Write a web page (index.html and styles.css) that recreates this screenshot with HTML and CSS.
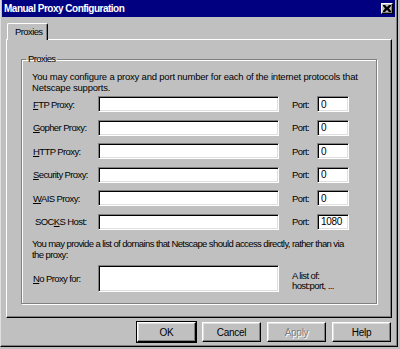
FILE: index.html
```html
<!DOCTYPE html>
<html>
<head>
   <title>Manual Proxy Configuration</title>
   <link rel="stylesheet" href="styles.css">
</head>
<body>
   <!-- dialog window -->
   <div class="window">
       <div class="titlebar">
           <span class="title">Manual Proxy Configuration</span>
           <span class="close-btn">
               <svg width="8" height="7" viewBox="0 0 8 7">
                   <path d="M0 0h2l2 2 2-2h2v1l-2 2.5 2 2.5v1h-2l-2-2-2 2h-2v-1l2-2.5-2-2.5z" fill="#000"/>
               </svg>
           </span>
       </div>

       <div class="content">
           <div class="tabs">
               <div class="tab active">Proxies</div>
           </div>
           <div class="tab-panel">
               <fieldset class="group">
                   <legend>Proxies</legend>
                   <p class="note note-first">You may configure a proxy and port number for each of the internet protocols that<br>Netscape supports.</p>

                   <div class="proxy-grid">
                       <label><u>F</u>TP Proxy:</label>
                       <input type="text" class="field host">
                       <label class="port-label">Port:</label>
                       <input type="text" class="field port" value="0">

                       <label><u>G</u>opher Proxy:</label>
                       <input type="text" class="field host">
                       <label class="port-label">Port:</label>
                       <input type="text" class="field port" value="0">

                       <label><u>H</u>TTP Proxy:</label>
                       <input type="text" class="field host">
                       <label class="port-label">Port:</label>
                       <input type="text" class="field port" value="0">

                       <label><u>S</u>ecurity Proxy:</label>
                       <input type="text" class="field host">
                       <label class="port-label">Port:</label>
                       <input type="text" class="field port" value="0">

                       <label><u>W</u>AIS Proxy:</label>
                       <input type="text" class="field host">
                       <label class="port-label">Port:</label>
                       <input type="text" class="field port" value="0">

                       <label class="indent">SOC<u>K</u>S Host:</label>
                       <input type="text" class="field host">
                       <label class="port-label">Port:</label>
                       <input type="text" class="field port" value="1080">
                   </div>

                   <p class="note note-second">You may provide a list of domains that Netscape should access directly, rather than via<br>the proxy:</p>

                   <div class="noproxy-row">
                       <label><u>N</u>o Proxy for:</label>
                       <textarea class="field noproxy"></textarea>
                       <div class="hint">A list of:<br>host:port, ...</div>
                   </div>
               </fieldset>
           </div>

           <div class="button-row">
               <button class="btn default">OK</button>
               <button class="btn">Cancel</button>
               <button class="btn" disabled>Apply</button>
               <button class="btn">Help</button>
           </div>
       </div>
   </div>
</body>
</html>
```

FILE: styles.css
```css
/* page */
body {
    margin: 0;
    background-color: #c0c0c0;
    font-family: "Liberation Sans", Arial, sans-serif;
    font-size: 9.5px;
    letter-spacing: -0.6px;
    color: #000;
}

/* window frame */
.window {
    width: 398px;
    height: 347px;
    box-sizing: border-box;
    padding: 0 2px 2px 1px;
    background-color: #c0c0c0;
    border-left: 1px solid #dfdfdf;
    border-right: 1px solid #000;
    border-bottom: 1px solid #000;
    box-shadow: inset -1px -1px #808080;
}

/* title bar */
.titlebar {
    display: flex;
    justify-content: space-between;
    align-items: center;
    height: 17px;
    padding: 0 1px 0 2px;
    background-color: #000080;
    color: #fff;
}

.title {
    font-weight: bold;
    font-size: 10px;
    letter-spacing: -0.5px;
}

.close-btn {
    display: flex;
    align-items: center;
    justify-content: center;
    width: 12px;
    height: 11px;
    box-sizing: border-box;
    background-color: #c0c0c0;
    border: 1px solid;
    border-color: #fff #000 #000 #fff;
    box-shadow: inset -1px -1px #808080;
    margin-right: 1px;
}

/* content below title */
.content {
    padding: 6px 3px 0 4px;
}

/* tabs */
.tabs {
    display: flex;
    padding-left: 1px;
}

.tab {
    position: relative;
    z-index: 1;
    height: 17px;
    box-sizing: border-box;
    padding: 2px 5px 0 7px;
    margin-bottom: -1px;
    background-color: #c0c0c0;
    border: 1px solid;
    border-bottom: none;
    border-color: #fff #000 #000 #fff;
    border-radius: 2px 2px 0 0;
    box-shadow: inset -1px 0 #808080;
    line-height: 12px;
}

/* tab page */
.tab-panel {
    height: 279px;
    box-sizing: border-box;
    padding: 13px 0 0 14px;
    border: 1px solid;
    border-color: #fff #000 #000 #fff;
    box-shadow: inset -1px -1px #808080;
}

/* group box */
.group {
    width: 356px;
    box-sizing: border-box;
    margin: 0;
    padding: 6px 0 11px 10px;
    border: 1px solid #808080;
    box-shadow: inset 1px 1px #fff, 1px 1px #fff;
}

.group legend {
    margin-left: -6px;
    padding: 0 2px;
    line-height: 12px;
}

.note {
    margin: 0;
    line-height: 11px;
    white-space: nowrap;
}

.note-first {
    letter-spacing: -0.2px;
}

.note-second {
    margin-top: 8px;
}

/* proxy rows */
.proxy-grid {
    display: grid;
    grid-template-columns: 66px 181px 38px 32px;
    grid-auto-rows: 16px;
    row-gap: 7.5px;
    align-items: center;
    margin-top: 3px;
    white-space: nowrap;
}

.proxy-grid label {
    padding-left: 1px;
}

.proxy-grid .indent {
    padding-left: 3px;
}

.proxy-grid .port-label {
    padding-left: 13px;
}

/* sunken edit fields */
.field {
    box-sizing: border-box;
    margin: 0;
    padding: 0 2px;
    background-color: #fff;
    border: 1px solid;
    border-color: #808080 #fff #fff #808080;
    box-shadow: inset 1px 1px #000, inset -1px -1px #dfdfdf;
    font-family: inherit;
    font-size: 10px;
    letter-spacing: -0.3px;
    color: #000;
    outline: none;
}

.host {
    width: 181px;
    height: 16px;
}

.port {
    width: 32px;
    height: 16px;
    padding-left: 3px;
}

/* no proxy row */
.noproxy-row {
    display: grid;
    grid-template-columns: 66px 181px auto;
    margin-top: 5px;
    white-space: nowrap;
}

.noproxy-row label {
    align-self: center;
    padding-left: 1px;
}

.noproxy {
    width: 181px;
    height: 27px;
    resize: none;
}

.hint {
    align-self: end;
    padding-left: 13px;
    line-height: 10px;
    padding-bottom: 1px;
}

/* dialog buttons */
.button-row {
    display: flex;
    justify-content: flex-end;
    gap: 6px;
    margin-top: 4px;
    padding-right: 1px;
}

.btn {
    width: 59px;
    height: 20px;
    box-sizing: border-box;
    padding: 0;
    background-color: #c0c0c0;
    border: 1px solid;
    border-color: #fff #000 #000 #fff;
    box-shadow: inset -1px -1px #808080, inset 1px 1px #dfdfdf;
    font-family: inherit;
    font-size: 10px;
    letter-spacing: -0.3px;
    color: #000;
}

.btn.default {
    outline: 1px solid #000;
}

.btn:disabled {
    color: #808080;
    text-shadow: 1px 1px #fff;
}
```
